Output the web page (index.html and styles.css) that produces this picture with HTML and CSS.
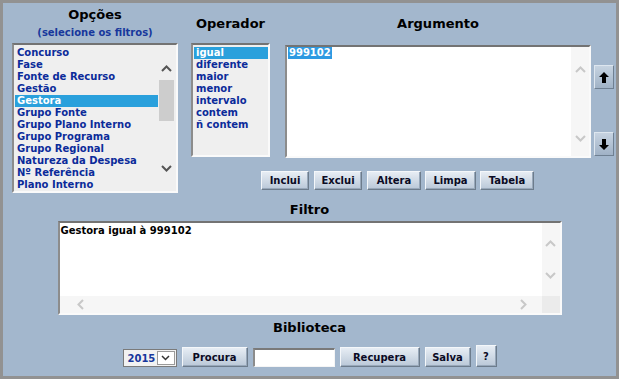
FILE: index.html
```html
<!DOCTYPE html>
<html lang="pt">
<head>
<meta charset="UTF-8">
<title>Filtros</title>
<link rel="stylesheet" href="styles.css">
</head>
<body>
<div id="painel">
    <div id="topo">
        <div class="col-opcoes">
            <div class="cab-opcoes">
                <h2>Opções</h2>
                <p>(selecione os filtros)</p>
            </div>
            <div class="caixa lista-opcoes">
                <ul class="lista">
                    <li>Concurso</li>
                    <li>Fase</li>
                    <li>Fonte de Recurso</li>
                    <li>Gestão</li>
                    <li class="selected">Gestora</li>
                    <li>Grupo Fonte</li>
                    <li>Grupo Plano Interno</li>
                    <li>Grupo Programa</li>
                    <li>Grupo Regional</li>
                    <li>Natureza da Despesa</li>
                    <li>Nº Referência</li>
                    <li>Plano Interno</li>
                </ul>
                <div class="barra-v escura">
                    <svg class="chev-cima" width="11" height="7" viewBox="0 0 11 7"><polyline points="1,6 5.5,1.5 10,6" fill="none" stroke="#555" stroke-width="2"/></svg>
                    <span class="polegar"></span>
                    <svg class="chev-baixo" width="11" height="7" viewBox="0 0 11 7"><polyline points="1,1 5.5,5.5 10,1" fill="none" stroke="#555" stroke-width="2"/></svg>
                </div>
            </div>
        </div>
        <div class="col-direita">
            <div class="linha">
                <div class="col-operador">
                    <h2 class="cab">Operador</h2>
                    <div class="caixa lista-operador">
                        <ul class="lista">
                            <li class="selected">igual</li>
                            <li>diferente</li>
                            <li>maior</li>
                            <li>menor</li>
                            <li>intervalo</li>
                            <li>contem</li>
                            <li>ñ contem</li>
                        </ul>
                    </div>
                </div>
                <div class="col-argumento">
                    <h2 class="cab">Argumento</h2>
                    <div class="caixa argumento">
                        <div class="conteudo"><span class="marcado">999102</span></div>
                        <div class="barra-v clara arg-barra">
                            <svg width="11" height="7" viewBox="0 0 11 7"><polyline points="1,6 5.5,1.5 10,6" fill="none" stroke="#c8c8c8" stroke-width="2"/></svg>
                            <svg width="11" height="7" viewBox="0 0 11 7"><polyline points="1,1 5.5,5.5 10,1" fill="none" stroke="#c8c8c8" stroke-width="2"/></svg>
                        </div>
                    </div>
                </div>
                <div class="col-setas">
                    <button class="seta seta-cima"><svg width="10" height="11" viewBox="0 0 10 11"><polygon points="5,0 10,5 7,5 7,11 3,11 3,5 0,5" fill="#000"/></svg></button>
                    <button class="seta seta-baixo"><svg width="10" height="11" viewBox="0 0 10 11"><polygon points="5,11 10,6 7,6 7,0 3,0 3,6 0,6" fill="#000"/></svg></button>
                </div>
            </div>
            <div class="acoes">
                <button class="botao b-inclui">Inclui</button>
                <button class="botao b-exclui">Exclui</button>
                <button class="botao b-altera">Altera</button>
                <button class="botao b-limpa">Limpa</button>
                <button class="botao b-tabela">Tabela</button>
            </div>
        </div>
    </div>

    <h2 class="titulo t-filtro">Filtro</h2>
    <div class="caixa filtro">
        <div class="filtro-corpo">
            <div class="conteudo texto-filtro">Gestora igual à 999102</div>
            <div class="barra-v clara filtro-barra">
                <svg width="11" height="7" viewBox="0 0 11 7"><polyline points="1,6 5.5,1.5 10,6" fill="none" stroke="#c8c8c8" stroke-width="2"/></svg>
                <svg width="11" height="7" viewBox="0 0 11 7"><polyline points="1,1 5.5,5.5 10,1" fill="none" stroke="#c8c8c8" stroke-width="2"/></svg>
            </div>
        </div>
        <div class="barra-h">
            <div class="trilho-h">
                <svg width="7" height="11" viewBox="0 0 7 11"><polyline points="6,1 1.5,5.5 6,10" fill="none" stroke="#c8c8c8" stroke-width="2"/></svg>
                <svg width="7" height="11" viewBox="0 0 7 11"><polyline points="1,1 5.5,5.5 1,10" fill="none" stroke="#c8c8c8" stroke-width="2"/></svg>
            </div>
            <span class="canto"></span>
        </div>
    </div>

    <h2 class="titulo t-biblioteca">Biblioteca</h2>
    <div class="rodape">
        <div class="ano">
            <span class="ano-valor">2015</span>
            <span class="ano-abre"><svg width="9" height="6" viewBox="0 0 9 6"><polyline points="1,1 4.5,4.5 8,1" fill="none" stroke="#333" stroke-width="1.5"/></svg></span>
        </div>
        <button class="botao b-procura">Procura</button>
        <input class="campo" type="text">
        <button class="botao b-recupera">Recupera</button>
        <button class="botao b-salva">Salva</button>
        <button class="botao b-ajuda">?</button>
    </div>
</div>
</body>
</html>
```

FILE: styles.css
```css
*{
    margin:0;
    padding:0;
    box-sizing:border-box;
}
ul{
    list-style:none;
}
body{
    font-family:"DejaVu Sans", Verdana, sans-serif;
    font-weight:bold;
    font-size:10px;
}
#painel{
    width:619px;
    height:379px;
    border:3px solid #929292;
    background-color:#a3b7cd;
}
h2{
    font-size:13px;
    line-height:16px;
    color:#000;
    text-align:center;
}

/* topo */
#topo{
    display:flex;
    padding-left:9px;
}
.col-opcoes{
    width:166px;
}
.cab-opcoes{
    height:40px;
    padding-top:4px;
    text-align:center;
}
.cab-opcoes p{
    margin-top:4px;
    line-height:12px;
    color:#17379c;
}
.caixa{
    border-style:solid;
    border-width:2px;
    border-color:#737373 #fafafa #fafafa #8c8c8c;
    background-color:#efefef;
}
.lista-opcoes{
    height:150px;
    display:flex;
}
.lista{
    flex:1;
    padding:2px 0 0 1px;
}
.lista li{
    height:12px;
    line-height:12px;
    padding-left:2px;
    color:#0b2b9a;
    white-space:nowrap;
}
.lista .selected{
    background-color:#2aa0dc;
    color:#fff;
}
.barra-v{
    display:flex;
    flex-direction:column;
    align-items:center;
}
.escura{
    width:17px;
    margin-right:1px;
}
.chev-cima{
    margin-top:20px;
}
.polegar{
    width:15px;
    height:41px;
    margin-top:8px;
    background-color:#cdcdcd;
}
.chev-baixo{
    margin-top:44px;
}

.col-direita{
    margin-left:13px;
}
.linha{
    display:flex;
}
.cab{
    height:40px;
    padding-top:13px;
}
.col-operador{
    width:79px;
}
.lista-operador{
    height:114px;
}
.col-argumento{
    width:306px;
    margin-left:15px;
}
.argumento{
    margin-top:2px;
    height:113px;
    display:flex;
    background-color:#fff;
}
.conteudo{
    flex:1;
    padding:0 0 0 1px;
    line-height:12px;
    color:#000;
}
.marcado{
    display:inline-block;
    background-color:#2e9ae2;
    color:#fff;
    padding:0 1px;
    height:12px;
}
.clara{
    width:18px;
    background-color:#f6f6f6;
}
.arg-barra{
    padding-top:19px;
    gap:62px;
}
.col-setas{
    width:20px;
    margin-left:3px;
    display:flex;
    flex-direction:column;
}
.seta{
    width:20px;
    height:24px;
    display:flex;
    align-items:center;
    justify-content:center;
    border:1px solid;
    border-color:#dde6ef #6f8092 #6f8092 #dde6ef;
    background:linear-gradient(#c6d3e1, #a0b2c6);
}
.seta-cima{
    margin-top:62px;
}
.seta-baixo{
    margin-top:43px;
}

.acoes{
    display:flex;
    margin-top:13px;
    padding-left:70px;
}
.botao{
    height:19px;
    font-family:"DejaVu Sans", Verdana, sans-serif;
    font-weight:bold;
    font-size:10px;
    color:#0a0a24;
    border:1px solid;
    border-color:#f4f7fa #6d7c8c #6d7c8c #f4f7fa;
    box-shadow:inset -1px -1px 0 #98a8ba;
    background:linear-gradient(#e7edf4, #bac8d8);
    margin-right:5px;
}
.b-inclui{ width:48px; }
.b-exclui{ width:48px; }
.b-altera{ width:54px; margin-right:4px; }
.b-limpa{ width:51px; margin-right:4px; }
.b-tabela{ width:54px; }

/* filtro */
.titulo{
    margin-top:9px;
}
.filtro{
    width:504px;
    height:94px;
    margin:3px auto 0;
    background-color:#fff;
    display:flex;
    flex-direction:column;
}
.filtro-corpo{
    flex:1;
    display:flex;
}
.texto-filtro{
    padding:2px 0 0 1px;
}
.filtro-barra{
    padding-top:17px;
    gap:25px;
}
.barra-h{
    height:17px;
    display:flex;
}
.trilho-h{
    flex:1;
    background-color:#f6f6f6;
    display:flex;
    align-items:center;
    justify-content:space-between;
    padding:0 15px 0 17px;
}
.canto{
    width:18px;
    background-color:#ebebeb;
}

/* biblioteca */
.t-biblioteca{
    margin-top:5px;
}
.rodape{
    display:flex;
    justify-content:center;
    align-items:flex-end;
    margin-top:9px;
}
.rodape .botao{
    height:20px;
}
.ano{
    width:54px;
    height:18px;
    display:flex;
    align-items:center;
    border:1px solid #7a7a7a;
    background-color:#f2f2f2;
    margin-right:5px;
}
.ano-valor{
    flex:1;
    padding-left:4px;
    color:#17379c;
    font-size:10px;
}
.ano-abre{
    width:18px;
    height:14px;
    margin-right:1px;
    display:flex;
    align-items:center;
    justify-content:center;
    border:1px solid #9a9a9a;
    background-color:#fff;
}
.b-procura{ width:66px; }
.campo{
    width:82px;
    height:19px;
    border-style:solid;
    border-width:2px 1px 1px 2px;
    border-color:#7a7a7a #f5f5f5 #f5f5f5 #8c8c8c;
    background-color:#fff;
    margin-right:5px;
}
.b-recupera{ width:80px; }
.b-salva{ width:46px; }
.b-ajuda{
    width:21px;
    margin-right:0;
}
.rodape .b-ajuda{
    height:22px;
}
```
